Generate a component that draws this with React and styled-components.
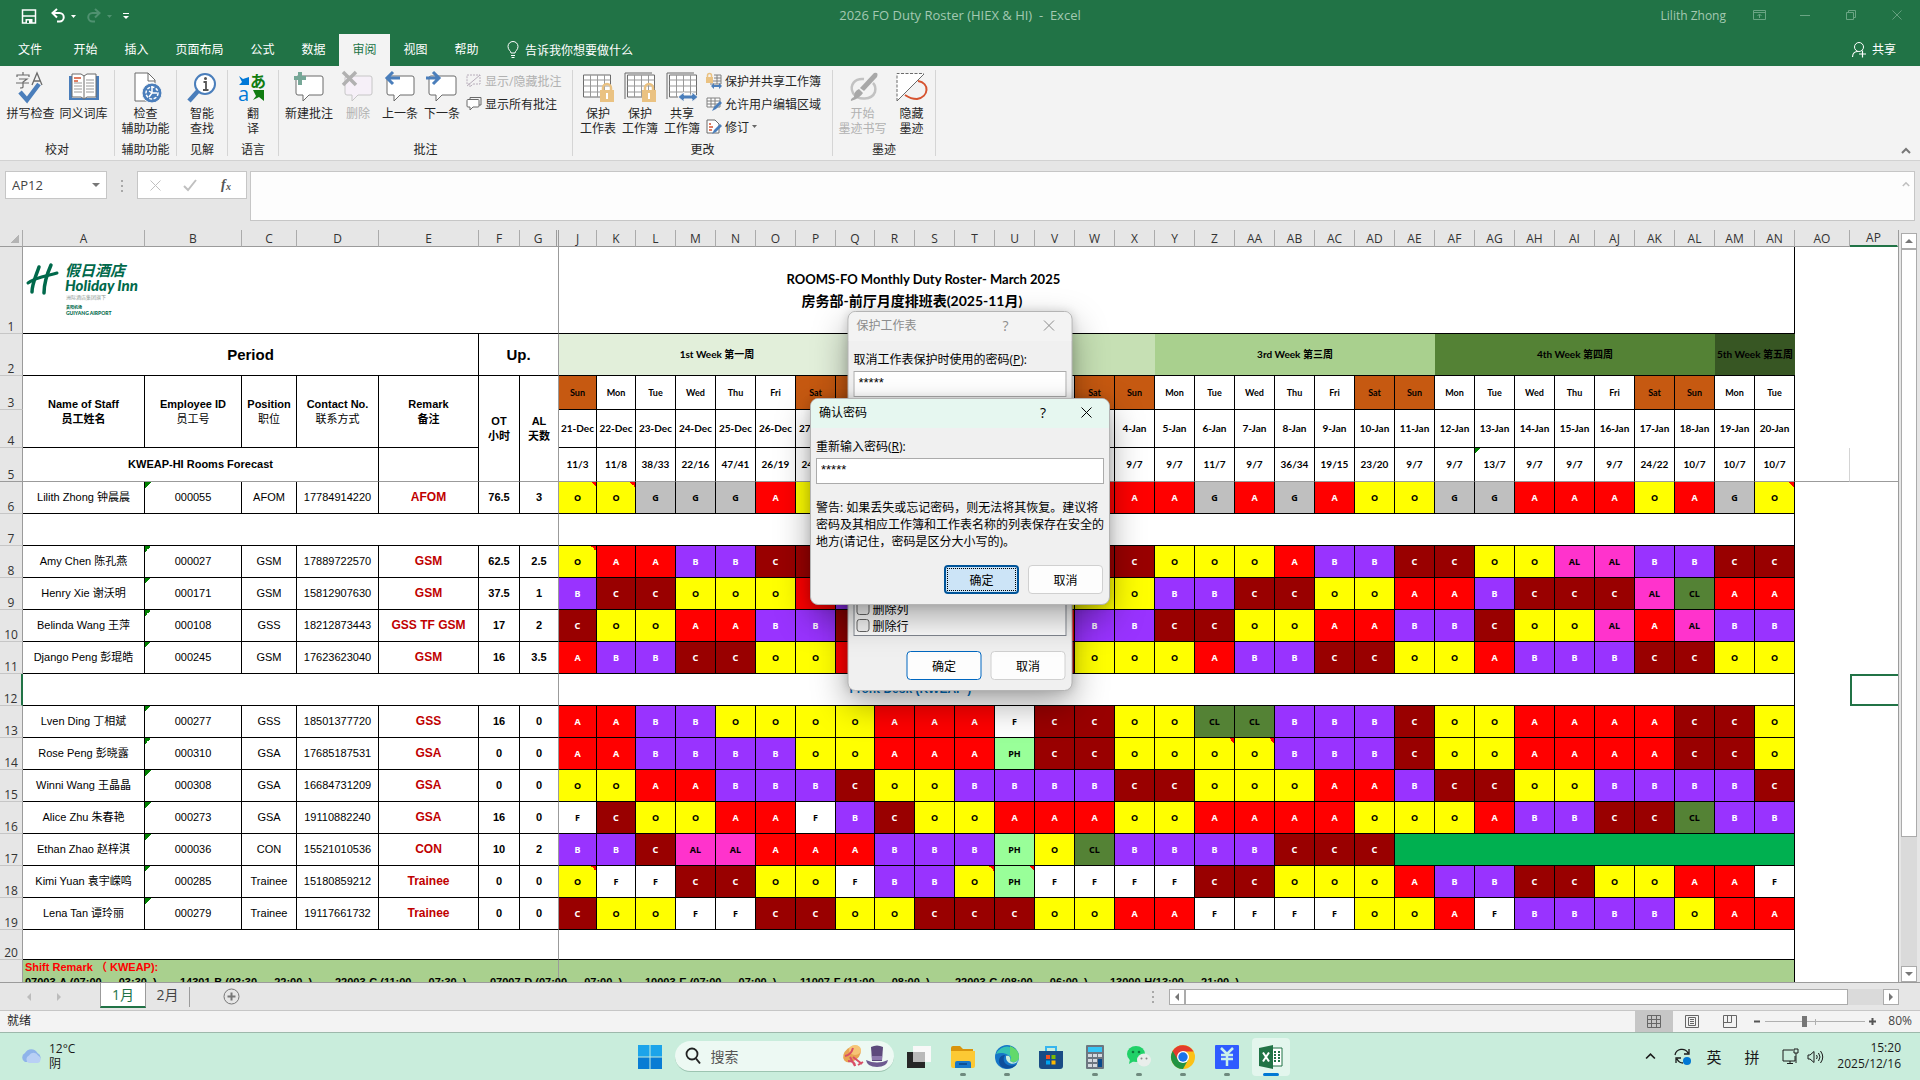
import { useState } from 'react'
import styled, { createGlobalStyle, css } from 'styled-components'

const GlobalStyle = createGlobalStyle`
  * {
    box-sizing: border-box;
  }
  body {
    margin: 0;
    font-family: 'Open Sans', 'Noto Sans CJK SC', sans-serif;
    font-size: 12px;
    color: #262626;
  }
  button, input, select, textarea {
    font: inherit;
    color: inherit;
  }
  button {
    padding: 0;
    border: 0;
    background: none;
  }
  svg {
    display: block;
    flex: none;
    overflow: visible;
  }
`

const Window = styled.div`
  display: flex;
  flex-direction: column;
  height: 100vh;
  overflow: hidden;
  background: #e6e6e6;
`

/* ---------- title bar and tabs ---------- */

const TitleBar = styled.header`
  display: grid;
  grid-template-columns: 1fr auto 1fr;
  align-items: center;
  height: 34px;
  padding-bottom: 4px;
  background: #217346;
  color: #a3c9b2;
`
const QuickAccess = styled.div`
  display: flex;
  align-items: center;
  gap: 10px;
  padding: 2px 0 0 18px;
`
const QuickButton = styled.button`
  display: flex;
  align-items: center;
  gap: 5px;
`
const DocTitle = styled.h1`
  margin: 0;
  font-size: 13px;
  font-weight: normal;
  white-space: pre;
`
const WindowControls = styled.div`
  display: flex;
  justify-content: flex-end;
  align-items: center;
`
const WindowButton = styled.button`
  display: flex;
  justify-content: center;
  width: 46px;
`
const UserName = styled.span`
  margin-right: 10px;
`
const TabBar = styled.nav`
  display: flex;
  align-items: center;
  height: 32px;
  padding-right: 24px;
  background: #217346;
  color: #fff;
`
const RibbonTab = styled.button`
  height: 32px;
  width: ${(p) => p.$width || 50}px;
  padding-bottom: 2px;
  background: ${(p) => (p.$active ? '#f3f3f3' : 'transparent')};
  color: ${(p) => (p.$active ? '#217346' : '#fff')};
`
const TellMe = styled.button`
  display: flex;
  align-items: center;
  gap: 6px;
  padding-left: 15px;
`
const ShareButton = styled.button`
  display: flex;
  align-items: center;
  gap: 4px;
  margin-left: auto;
  padding-bottom: 2px;
`

/* ---------- ribbon ---------- */

const Ribbon = styled.section`
  display: flex;
  height: 95px;
  padding: 4px 0;
  background: #f3f3f3;
  border-bottom: 1px solid #d2d2d2;
`
const Group = styled.div`
  display: flex;
  flex-direction: column;
  justify-content: space-between;
  padding: 0 ${(p) => p.$pad || 0}px;
  border-right: 1px solid #d5d5d5;
`
const GroupItems = styled.div`
  display: flex;
`
const GroupLabel = styled.div`
  line-height: 13px;
  text-align: center;
`
const LargeButton = styled.button`
  display: flex;
  flex-direction: column;
  align-items: center;
  gap: 3px;
  width: ${(p) => p.$width}px;
  padding-top: 1px;
  line-height: 15px;
  white-space: pre;
  color: ${(p) => (p.disabled ? '#b1b1b1' : '#262626')};
`
const SmallStack = styled.div`
  display: flex;
  flex-direction: column;
  min-width: ${(p) => p.$width}px;
`
const SmallButton = styled.button`
  display: flex;
  align-items: center;
  gap: 3px;
  height: 23px;
  padding: 0 3px 2px;
  white-space: nowrap;
  color: ${(p) => (p.disabled ? '#b1b1b1' : '#262626')};
`
const CollapseButton = styled.button`
  align-self: flex-end;
  margin-left: auto;
  padding: 0 9px 2px;
`

/* ---------- formula bar ---------- */

const FormulaBar = styled.section`
  display: flex;
  align-items: flex-start;
  height: 69px;
  padding: 10px 5px 9px;
`
const NameBox = styled.label`
  display: flex;
  align-items: center;
  width: 102px;
  height: 28px;
  padding-right: 6px;
  background: #fff;
  border: 1px solid #c6c6c6;
`
const NameInput = styled.input`
  width: 100%;
  min-width: 0;
  padding: 0 6px;
  border: 0;
  outline: 0;
  font-size: 13px;
  color: #444;
`
const Grip = styled.span`
  display: flex;
  flex-direction: column;
  gap: 3px;
  padding: ${(p) => p.$pad};
  margin-left: ${(p) => (p.$push ? 'auto' : 0)};
  &::before, &::after, & > i {
    content: '';
    width: 2px;
    height: 2px;
    background: #a8a8a8;
  }
`
const FormulaTools = styled.div`
  display: flex;
  align-items: center;
  justify-content: space-between;
  width: 110px;
  height: 28px;
  padding: 0 11px 0 12px;
  margin-right: 3px;
  background: #fff;
  border: 1px solid #c6c6c6;
`
const FormulaField = styled.div`
  display: flex;
  flex: 1;
  align-items: flex-start;
  height: 50px;
  padding-right: 4px;
  background: #fdfdfd;
  border: 1px solid #c6c6c6;
`
const FormulaInput = styled.textarea`
  flex: 1;
  height: 48px;
  border: 0;
  outline: 0;
  resize: none;
  background: transparent;
`
const FormulaCollapse = styled.button`
  padding-top: 10px;
`

/* ---------- sheet ---------- */

const SheetArea = styled.main`
  display: flex;
  flex: 1;
  min-height: 0;
`
const SheetView = styled.div`
  flex: 1;
  min-width: 0;
  overflow: hidden;
  border-right: 1px solid #9b9b9b;
`
const Table = styled.table`
  width: 100%;
  table-layout: fixed;
  border-collapse: separate;
  border-spacing: 0;
  background: #fff;
  color: #000;
  font-family: 'Liberation Sans', 'Noto Sans CJK SC', sans-serif;
  font-size: 11px;
`
const Row = styled.tr`
  height: ${(p) => p.$height}px;
`
const ColHead = styled.th`
  height: 17px;
  padding: 0;
  background: #e6e6e6;
  border-right: ${(p) => (p.$double ? '3px double #9b9b9b' : `1px solid ${p.$last ? '#e6e6e6' : '#ababab'}`)};
  border-bottom: ${(p) => (p.$active ? '2px solid #217346' : '1px solid #9b9b9b')};
  font: 12px/15px 'Open Sans', sans-serif;
  color: #333;
`
const Corner = styled(ColHead)`
  background: linear-gradient(to bottom right, transparent 50%, #b4b4b4 50%) no-repeat 11px 5px / 8px 8px #e6e6e6;
`
const RowHead = styled.th`
  padding: 0;
  vertical-align: bottom;
  background: #e6e6e6;
  border-right: ${(p) => (p.$active ? '2px solid #217346' : '1px solid #9b9b9b')};
  border-bottom: 1px solid ${(p) => (p.$frozen ? '#9b9b9b' : '#c6c6c6')};
  font: 12px/13px 'Open Sans', sans-serif;
  color: #333;
`

const black = '1px solid #000'
const gray = '1px solid #9b9b9b'

const Cell = styled.td`
  padding: 0;
  line-height: 15px;
  text-align: center;
  white-space: pre;
  font-weight: ${(p) => (p.$bold ? 'bold' : 'normal')};
  border-right: ${(p) => (p.$pane ? gray : p.$open ? 0 : black)};
  border-bottom: ${(p) => (p.$frozen ? gray : black)};
`
const BigCell = styled(Cell)`
  font-size: 15px;
  font-weight: bold;
`
const LogoCell = styled(Cell)`
  padding: 17px 4px 0;
  vertical-align: top;
`
const TitleCell = styled(Cell)`
  font: bold 13px/21px Lato, 'Noto Sans CJK SC', sans-serif;
`
const Subtitle = styled.span`
  font-size: 14px;
`
const SectionCell = styled(Cell)`
  font-size: 12px;
  font-weight: bold;
  color: #0070c0;
`
const SubLabel = styled.span`
  font-weight: normal;
`
const IdCell = styled(Cell)`
  background: linear-gradient(to bottom right, #008000 50%, transparent 50%) no-repeat 0 0 / 6px 6px;
`
const RemarkCell = styled(Cell)`
  font-size: 12px;
  font-weight: bold;
  color: #c00000;
`
const WeekCell = styled(Cell)`
  font: bold 10px/15px Lato, 'Noto Sans CJK SC', sans-serif;
  background: ${(p) => p.$color};
  border-right: 0;
`
const DayCell = styled(Cell)`
  font: bold ${(p) => (p.$small ? 9 : 10)}px/15px Lato, sans-serif;
  background: ${(p) => (p.$weekend ? '#c65911' : '#fff')};
  ${(p) =>
    p.$flag &&
    css`
      background: linear-gradient(to bottom right, #008000 50%, transparent 50%) no-repeat 0 0 / 5px 5px;
    `}
`
const shiftColors = {
  O: ['#ffff00', '#000'],
  A: ['#ff0000', '#fff'],
  B: ['#9933ff', '#fff'],
  C: ['#990000', '#fff'],
  G: ['#bfbfbf', '#000'],
  F: ['#ffffff', '#000'],
  AL: ['#ff33cc', '#000'],
  CL: ['#548235', '#000'],
  PH: ['#99ff99', '#000'],
  '': ['#00b050', '#000'],
}
const ShiftCell = styled(Cell)`
  font: bold 9px/15px 'Noto Sans', sans-serif;
  color: ${(p) => shiftColors[p.$code][1]};
  background: ${(p) => (p.$note ? 'linear-gradient(to bottom left, #ff0000 50%, transparent 50%) no-repeat 100% 0 / 5px 5px' : 'none')}
    ${(p) => shiftColors[p.$code][0]};
`
const BlankCell = styled.td`
  padding: 0;
  border-bottom: ${(p) => (p.$frozen ? gray : 0)};
  border-right: ${(p) => (p.$line ? '1px solid #d4d4d4' : 0)};
`
const SelectedCell = styled.td`
  border: 2px solid #217346;
  border-right: 0;
`
const NoteCell = styled(Cell)`
  padding-left: 2px;
  vertical-align: top;
  text-align: left;
  font-weight: bold;
  background: #a9d08e;
`
const NoteHeading = styled.div`
  color: #ff0000;
`
const NoteShifts = styled.div`
  display: flex;
`
const NoteShift = styled.span`
  flex: none;
  width: 155px;
`

const ScrollColumn = styled.div`
  display: flex;
  flex-direction: column;
  width: 21px;
  padding: 3px 3px 0 2px;
`
const ScrollTrack = styled.div`
  flex: 1;
  display: flex;
  flex-direction: ${(p) => (p.$vertical ? 'column' : 'row')};
  background: #dadada;
`
const ScrollThumb = styled.div`
  flex-basis: ${(p) => p.$size};
  background: #fff;
  border: 1px solid #ababab;
`
const ScrollButton = styled.button`
  display: flex;
  align-items: center;
  justify-content: center;
  width: 16px;
  height: 16px;
  background: #fff;
  border: 1px solid #ababab;
`

/* ---------- bottom bars ---------- */

const SheetTabs = styled.div`
  display: flex;
  align-items: center;
  height: 29px;
  border-top: 1px solid #9b9b9b;
  border-bottom: 1px solid #c6c6c6;
  padding-right: 21px;
`
const SheetNav = styled.div`
  display: flex;
  justify-content: center;
  gap: 22px;
  width: 100px;
  padding-right: 12px;
`
const SheetTab = styled.button`
  align-self: flex-start;
  width: ${(p) => (p.$active ? 46 : 43)}px;
  height: 25px;
  padding-bottom: 2px;
  font-size: 14px;
  color: ${(p) => (p.$active ? '#217346' : '#444')};
  background: ${(p) => (p.$active ? '#fff' : 'transparent')};
  border-bottom: 2px solid ${(p) => (p.$active ? '#217346' : 'transparent')};
  border-left: 1px solid ${(p) => (p.$active ? '#9b9b9b' : 'transparent')};
  border-right: 1px solid ${(p) => (p.$active ? '#9b9b9b' : 'transparent')};
`
const TabDivider = styled.span`
  width: 1px;
  height: 20px;
  margin-right: 33px;
  background: #9b9b9b;
`
const HScroll = styled.div`
  display: flex;
  width: 730px;
  height: 16px;
`
const StatusBar = styled.footer`
  display: flex;
  align-items: center;
  height: 22px;
  padding: 0 8px 0 7px;
  line-height: 20px;
  background: #f3f3f3;
  border-bottom: 1px solid #9db8ab;
`
const StatusText = styled.span`
  padding-bottom: 2px;
`
const ViewButton = styled.button`
  display: flex;
  align-items: center;
  justify-content: center;
  width: 38px;
  height: 21px;
  background: ${(p) => (p.$active ? '#c6c6c6' : 'transparent')};
`
const ViewButtons = styled.div`
  display: flex;
  margin: 0 5px 0 auto;
`
const ZoomSlider = styled.input`
  appearance: none;
  width: 100px;
  height: 12px;
  margin: 0 4px;
  background:
    linear-gradient(#b0b0b0, #b0b0b0) no-repeat 50px 50% / 1px 6px,
    linear-gradient(#b0b0b0, #b0b0b0) no-repeat 0 50% / 100% 1px;
  &::-webkit-slider-thumb {
    appearance: none;
    width: 5px;
    height: 11px;
    background: #767676;
  }
`
const ZoomValue = styled.span`
  width: 36px;
  padding-bottom: 2px;
  text-align: right;
  color: #444;
`

/* ---------- dialogs ---------- */

const Dialog = styled.section`
  position: absolute;
  top: ${(p) => p.$top}px;
  left: 50%;
  width: ${(p) => p.$width}px;
  transform: translateX(-50%);
  background: #f0f0f0;
  border: 1px solid #b4b4b4;
  border-radius: 8px;
  box-shadow: 0 14px 34px rgba(0, 0, 0, 0.34), 0 0 10px rgba(0, 0, 0, 0.14);
  color: #000;
  overflow: hidden;
`
const DialogTitle = styled.header`
  display: flex;
  align-items: center;
  height: 29px;
  padding: 0 17px 3px 8px;
  background: ${(p) => (p.$active ? '#e6f7f0' : '#f3f3f3')};
  color: ${(p) => (p.$active ? '#000' : '#8c8c8c')};
`
const DialogHeading = styled.h2`
  flex: 1;
  margin: 0;
  font-size: 12px;
  font-weight: normal;
`
const DialogHelp = styled.button`
  width: 16px;
  margin-right: 30px;
  font-size: 14px;
`
const DialogBody = styled.div`
  padding: 10px 5px;
`
const FieldLabel = styled.label`
  display: block;
  line-height: 17px;
  margin-bottom: 3px;
`
const PasswordInput = styled.input`
  display: block;
  width: 100%;
  height: 26px;
  padding: 0 4px 4px;
  border: 1px solid #ababab;
  background: #fff;
  outline: 0;
  font: 13px 'Liberation Sans', sans-serif;
`
const Warning = styled.p`
  margin: 15px 0;
  line-height: 17px;
  white-space: pre;
`
const PermissionList = styled.div`
  display: flex;
  flex-direction: column;
  justify-content: flex-end;
  height: 231px;
  margin-top: 8px;
  padding: 2px 18px 1px 2px;
  background: #fff;
  border: 1px solid #828790;
`
const CheckRow = styled.label`
  display: flex;
  align-items: center;
  gap: 3px;
  height: 17px;
`
const CheckBox = styled.input`
  appearance: none;
  width: 13px;
  height: 13px;
  margin: 0;
  border: 1px solid #666;
  border-radius: 3px;
  background: #f6f6f6;
`
const DialogActions = styled.div`
  display: flex;
  justify-content: flex-end;
  gap: 9px;
  padding: ${(p) => p.$top || 0}px 1px 0;
`
const DialogButton = styled.button`
  width: 75px;
  height: 29px;
  background: #fdfdfd;
  border: 1px solid ${(p) => (p.$primary ? '#0067c0' : '#d0d0d0')};
  border-radius: 4px;
  ${(p) =>
    p.$focused &&
    css`
      background: #cce4f7;
      border: 2px solid #005499;
      outline: 1px dotted #000;
      outline-offset: -4px;
    `}
`

/* ---------- taskbar ---------- */

const Taskbar = styled.footer`
  display: grid;
  grid-template-columns: 1fr auto 1fr;
  align-items: center;
  height: 47px;
  padding: 0 19px;
  background: #c9eddc;
  color: #1a1a1a;
`
const Weather = styled.div`
  display: flex;
  align-items: center;
  gap: 6px;
  padding-bottom: 2px;
  line-height: 15px;
`
const Apps = styled.div`
  display: flex;
  align-items: center;
`
const AppButton = styled.button`
  display: flex;
  align-items: center;
  justify-content: center;
  position: relative;
  width: 38px;
  height: 38px;
  margin: 0 3px;
  border-radius: 4px;
  background: ${(p) => (p.$active ? '#e3f6ed' : 'transparent')};
  &::after {
    content: '';
    position: absolute;
    bottom: 0;
    width: ${(p) => (p.$active ? 16 : 6)}px;
    height: 3px;
    border-radius: 2px;
    background: ${(p) => (p.$active ? '#0078d4' : p.$running ? '#6f8a7e' : 'transparent')};
  }
`
const SearchBox = styled.label`
  display: flex;
  align-items: center;
  gap: 10px;
  width: 219px;
  height: 31px;
  margin: 0 3px;
  padding: 0 5px 0 10px;
  border-radius: 16px;
  background: #edf9f3;
  border-bottom: 1px solid #9cc4b1;
`
const SearchInput = styled.input`
  flex: 1;
  min-width: 0;
  padding: 0;
  border: 0;
  outline: 0;
  background: transparent;
  font-size: 14px;
  &::placeholder {
    color: #555;
  }
`
const Tray = styled.div`
  display: flex;
  justify-content: flex-end;
  align-items: center;
`
const TrayItem = styled.button`
  display: flex;
  justify-content: center;
  width: ${(p) => p.$width}px;
  font-size: 15px;
`
const Clock = styled.div`
  width: 77px;
  padding-bottom: 2px;
  line-height: 16px;
  text-align: right;
`

/* ---------- icons ---------- */

const Svg = ({ w = 32, h = w, children }) => (
  <svg width={w} height={h} viewBox={`0 0 ${w} ${h}`} fill='none' aria-hidden='true'>
    {children}
  </svg>
)

const Caret = ({ color = '#fff' }) => (
  <Svg w={5} h={3}>
    <path d='M0 0h5L2.500 3z' fill={color} />
  </Svg>
)

const Arrow = ({ dir, color = '#777', size = 8 }) => (
  <Svg w={size}>
    <path d={dir} fill={color} />
  </Svg>
)

const ARROWS = {
  up: 'M0 6l4-4 4 4z',
  down: 'M0 2l4 4 4-4z',
  left: 'M6 0L2 4l4 4z',
  right: 'M2 0l4 4-4 4z',
}

const Chevron = ({ color = '#777', width = 2, size = 10 }) => (
  <svg width={size} height={size * 0.6} viewBox='0 0 10 6' fill='none' aria-hidden='true'>
    <path d='M1 5l4-4 4 4' stroke={color} strokeWidth={width} />
  </svg>
)

const SaveIcon = () => (
  <Svg w={22} h={16}>
    <path d='M4.500 2h13v13h-13z' stroke='#fff' strokeWidth='1.500' />
    <path d='M5 8h12' stroke='#fff' strokeWidth='1.500' />
    <path d='M7.500 11h7v4h-7z' fill='#fff' />
    <path d='M9 12.500h2V15H9z' fill='#217346' />
  </Svg>
)

const UndoIcon = ({ flip, color }) => (
  <svg width='16' height='16' viewBox='0 0 16 16' fill='none' aria-hidden='true'>
    <g transform={flip ? 'matrix(-1 0 0 1 16 0)' : undefined}>
      <path d='M2 5h7.500a4 4 0 0 1 0 8.500H7' stroke={color} strokeWidth='2' />
      <path d='M7 1L2.500 5 7 9.500' stroke={color} strokeWidth='2' />
    </g>
  </svg>
)

const BulbIcon = () => (
  <Svg w={12} h={18}>
    <path d='M4 12c0-2-3-3-3-6.500a5 5 0 0 1 10 0C11 9 8 10 8 12zM4 14.500h4M4.500 16.500h3' stroke='#fff' />
  </Svg>
)

const ShareIcon = () => (
  <Svg w={17} h={17}>
    <circle cx='8' cy='6' r='4.500' stroke='#fff' />
    <path d='M1.500 16c0-4 3-5.500 5.500-5.500M8 13h7M11.500 9.500v7' stroke='#fff' strokeWidth='1.200' />
  </Svg>
)

const SpellIcon = () => (
  <Svg>
    <path d='M2 6V4h12v2M8 1v3M4 8h8l-4 3v5c0 1-1 1-3 1M1 12h13' stroke='#6b6b6b' strokeWidth='1.200' />
    <path d='M17 14l5-12 5 12M19 10h6' stroke='#6b6b6b' strokeWidth='1.300' />
    <path d='M5 21l7 8L24 13' stroke='#4a7ebb' strokeWidth='4.500' />
  </Svg>
)

const BookIcon = () => (
  <Svg>
    <path d='M1 5h3v22h24V5h3v24H1z' fill='#4a7ebb' />
    <path d='M4 3h9l3 2 3-2h9v23h-9l-3 2-3-2H4zM16 5v22' fill='#fff' stroke='#6b6b6b' />
    <path d='M6 12h8M6 15h8M6 18h8M6 21h8M18 9h8M18 12h8M18 15h8M18 18h8M18 21h8' stroke='#999' />
    <path d='M6 7h7M6 10h4' stroke='#d6532f' strokeWidth='1.500' />
  </Svg>
)

const AccessIcon = () => (
  <Svg>
    <path d='M5 2h13l7 7v21H5z' fill='#fff' stroke='#6b6b6b' />
    <path d='M18 2v8h7' stroke='#6b6b6b' />
    <circle cx='22' cy='22' r='10' fill='#4a7ebb' stroke='#f3f3f3' />
    <circle cx='22' cy='22' r='6' stroke='#fff' strokeWidth='1.500' strokeDasharray='3 1.500' />
    <path d='M22 15v7h5M19 20l3 2-3 4' stroke='#fff' strokeWidth='1.500' />
  </Svg>
)

const LookupIcon = () => (
  <Svg>
    <path d='M12 20L3 30' stroke='#4a7ebb' strokeWidth='4.500' />
    <circle cx='19' cy='13' r='10' fill='#fff' stroke='#4a7ebb' strokeWidth='2' />
    <path d='M17.500 11H20v8M17 19h5.500' stroke='#555' strokeWidth='1.800' />
    <circle cx='19.500' cy='7.500' r='1.500' fill='#555' />
  </Svg>
)

const TranslateIcon = () => (
  <Svg>
    <path d='M2 5l4 3 6-2v8H2l3-3z' fill='#0078d7' />
    <text x='1' y='30' fontSize='20' fontFamily='Open Sans' fill='#0078d7'>a</text>
    <text x='13' y='16' fontSize='16' fontWeight='bold' fontFamily='Noto Sans CJK SC' fill='#107c10'>あ</text>
    <path d='M16 19h11v11l-5-4-6 3 3-4z' fill='#107c10' />
  </Svg>
)

const CommentIcon = ({ mark, faded }) => (
  <Svg>
    <path
      d='M5 5h23q2 0 2 2v15q0 2-2 2H16l-6 6v-6H5q-2 0-2-2V7q0-2 2-2z'
      fill={faded ? '#f6f0f8' : '#fff'}
      stroke={faded ? '#c6c6c6' : '#6b6b6b'}
    />
    {mark === 'plus' && <path d='M7 1v13M1 7h12' stroke='#76a797' strokeWidth='4' />}
    {mark === 'cross' && <path d='M1 1l13 13M14 1L1 14' stroke='#b1b1b1' strokeWidth='3.500' />}
    {mark === 'prev' && <path d='M16 7H3M9 1L3 7l6 6' stroke='#4a7ebb' strokeWidth='3' />}
    {mark === 'next' && <path d='M0 7h13M7 1l6 6-6 6' stroke='#4a7ebb' strokeWidth='3' />}
  </Svg>
)

const SmallCommentIcon = ({ faded }) => (
  <Svg w={16}>
    {faded ? (
      <>
        <path d='M1 2h13v9H7l-3 3v-3H1z' stroke='#b8aebb' strokeDasharray='2 1' />
        <path d='M1 13L14 2' stroke='#b8aebb' />
      </>
    ) : (
      <>
        <path d='M4 3V1.500h11V9h-2' stroke='#6b6b6b' />
        <path d='M2 3.500h10q1 0 1 1V10q0 1-1 1H7l-3 3v-3H2q-1 0-1-1V4.500q0-1 1-1z' fill='#fff' stroke='#6b6b6b' />
      </>
    )}
  </Svg>
)

const SheetGrid = ({ x = 0 }) => (
  <>
    <path d={`M${x} 4h27v22h-27z`} fill='#fff' stroke='#6b6b6b' />
    <path d={`M${x} 9h27M${x} 15h27M${x} 21h27M${x + 7} 4v22M${x + 14} 4v22M${x + 21} 4v22`} stroke='#999' />
  </>
)

const ProtectIcon = ({ book }) => (
  <Svg>
    {book && <path d='M1 28V2h27' stroke='#6b6b6b' />}
    <SheetGrid x={book ? 3.5 : 1.5} />
    <path d='M21 20v-3a4 4 0 0 1 8 0v3' stroke='#eac282' strokeWidth='2.500' />
    <path d='M18 19h14v12H18z' fill='#eac282' />
    <path d='M25 22v6' stroke='#fff' strokeWidth='2' />
  </Svg>
)

const ShareBookIcon = () => (
  <Svg>
    <path d='M1 28V2h27' stroke='#6b6b6b' />
    <SheetGrid x={3.5} />
    <path d='M12 26l6-5v3h8v-3l6 5-6 5v-3h-8v3z' fill='#4a7ebb' stroke='#f3f3f3' />
  </Svg>
)

const ProtectShareIcon = () => (
  <Svg w={16}>
    <path d='M8 2h7v9H4M8 5h7M4 8h11M11 2v9' stroke='#808080' />
    <path d='M0 4h7v6H0z' fill='#eac282' />
    <path d='M1.500 4V2.500a2 2 0 0 1 4 0V4' stroke='#eac282' strokeWidth='1.500' />
    <path d='M5 13l3-3v2h5v-2l3 3-3 3v-2H8v2z' fill='#4a7ebb' />
  </Svg>
)

const EditRangesIcon = () => (
  <Svg w={16}>
    <path d='M1 2h13v9H1zM1 5h13M1 8h13M5 2v9M9 2v9' fill='#fff' stroke='#808080' />
    <path d='M6 15l2-4 6-6 2 2-6 6z' fill='#4a7ebb' />
  </Svg>
)

const TrackIcon = () => (
  <Svg w={16}>
    <path d='M1 1h8l4 4v9H1z' fill='#fff' stroke='#6b6b6b' />
    <path d='M3 5h2M3 8h4M3 11h3' stroke='#d6532f' strokeWidth='1.500' />
    <path d='M6 15l2-4 6-6 2 2-6 6z' fill='#4a7ebb' />
  </Svg>
)

const InkIcon = () => (
  <Svg>
    <path d='M17 8C8 7 2 14 6 22c5 8 19 7 22-1 1-4 0-7-2-9' stroke='#c2c2c2' strokeWidth='2.500' />
    <path d='M13 17L27 2q5-1 3 4L17 20z' fill='#a8a8a8' />
    <path d='M12 18l4 4q-3 5-12 8-1-2 3-4 0-6 5-8z' fill='#a8a8a8' />
  </Svg>
)

const HideInkIcon = () => (
  <Svg>
    <path d='M1 30V3h27z' fill='#fff' />
    <path d='M1 30V2.500h27' stroke='#6b6b6b' strokeDasharray='3 1.500' />
    <path d='M22 10c12 2 11 16-1 18-6 0-9-2-12-4' stroke='#d6532f' strokeWidth='2' />
    <path d='M1 30L28 3' stroke='#6b6b6b' />
  </Svg>
)

const LogoImage = () => (
  <svg width='120' height='56' viewBox='0 0 120 56' role='img' aria-label='Holiday Inn Guiyang Airport'>
    <g stroke='#00694b' fill='none' strokeLinecap='round'>
      <path d='M12 3C9 12 5 20 5 28' strokeWidth='3.500' />
      <path d='M24 1C20 10 17 20 17 29' strokeWidth='3.500' />
      <path d='M1 19C9 13 20 12 30 9' strokeWidth='3' />
    </g>
    <g fill='#00694b' fontFamily="Lato, 'Noto Sans CJK SC', sans-serif" fontWeight='bold'>
      <text x='38' y='12' fontSize='15' fontStyle='italic'>假日酒店</text>
      <text x='38' y='27' fontSize='15' fontWeight='900' fontStyle='italic'>Holiday Inn</text>
      <text x='39' y='35' fontSize='5' fill='#8c9994' fontWeight='normal'>洲际酒店集团旗下</text>
      <text x='39' y='45' fontSize='4'>贵阳机场</text>
      <text x='39' y='51' fontSize='5' fontWeight='900'>GUIYANG AIRPORT</text>
    </g>
  </svg>
)

const CloseIcon = ({ color = 'currentColor', size = 11 }) => (
  <svg width={size} height={size} viewBox='0 0 11 11' fill='none' aria-hidden='true'>
    <path d='M.5.5l10 10M10.500.5l-10 10' stroke={color} />
  </svg>
)

/* ---------- data ---------- */

const columns = [
  ['A', 122], ['B', 97], ['C', 55], ['D', 82], ['E', 100], ['F', 41], ['G', 39],
  ['J', 38], ['K', 39], ['L', 40], ['M', 40], ['N', 40], ['O', 40], ['P', 40], ['Q', 39],
  ...['R', 'S', 'T', 'U', 'V', 'W', 'X', 'Y', 'Z', 'AA', 'AB', 'AC', 'AD', 'AE', 'AF',
    'AG', 'AH', 'AI', 'AJ', 'AK', 'AL', 'AM', 'AN'].map((name) => [name, 40]),
  ['AO', 55], ['AP'],
]

const weekdays = ['Sun', 'Mon', 'Tue', 'Wed', 'Thu', 'Fri', 'Sat']

const days = Array.from({ length: 31 }, (_, i) => ({
  name: weekdays[i % 7],
  date: i < 11 ? `${21 + i}-Dec` : `${i - 10}-Jan`,
  weekend: i % 7 === 0 || i % 7 === 6,
}))

const forecast = (
  '11/3 11/8 38/33 22/16 47/41 26/19 24/18 20/15 18/12 16/10 25/21 30/26 22/18 12/8 9/7 9/7 ' +
  '11/7 9/7 36/34 19/15 23/20 9/7 9/7 13/7 9/7 9/7 9/7 24/22 10/7 10/7 10/7'
).split(' ')

const weeks = [
  ['1st Week 第一周', 8, '#e2efda'],
  ['2nd Week 第二周', 7, '#c6e0b4'],
  ['3rd Week 第三周', 7, '#a9d08e'],
  ['4th Week 第四周', 7, '#548235'],
  ['5th Week 第五周', 2, '#375623'],
]

// an asterisk marks a cell with a note attached
const staff = [
  { row: 6, name: 'Lilith Zhong 钟晨晨', id: '000055', pos: 'AFOM', tel: '17784914220', remark: 'AFOM', ot: '76.5', al: '3',
    shifts: 'O* O* G G G A O O A A A O O A A A G A G A O O G G A A A O A G O*' },
  { row: 8, name: 'Amy Chen 陈孔燕', id: '000027', pos: 'GSM', tel: '17889722570', remark: 'GSM', ot: '62.5', al: '2.5',
    shifts: 'O* A A B B C C O O A A B B C C O O O A B B C C O O AL AL B B C C' },
  { row: 9, name: 'Henry Xie 谢沃明', id: '000171', pos: 'GSM', tel: '15812907630', remark: 'GSM', ot: '37.5', al: '1',
    shifts: 'B C C O O O A B B C C O O O O B B C C O O A A B C C C AL CL A A' },
  { row: 10, name: 'Belinda Wang 王萍', id: '000108', pos: 'GSS', tel: '18212873443', remark: 'GSS TF GSM', ot: '17', al: '2',
    shifts: 'C O O A A B B C C O O A A B B C C O O A A B B C O O AL A AL B B' },
  { row: 11, name: 'Django Peng 彭琨皓', id: '000245', pos: 'GSM', tel: '17623623040', remark: 'GSM', ot: '16', al: '3.5',
    shifts: 'A B B C C O O A A B B C C O O O A B B C C O O A B B B C C O O' },
  { row: 13, name: 'Lven Ding 丁相斌', id: '000277', pos: 'GSS', tel: '18501377720', remark: 'GSS', ot: '16', al: '0',
    shifts: 'A A B B O O O O A A A F C C O O CL CL B B B C O O A A A A C C O' },
  { row: 14, name: 'Rose Peng 彭晓露', id: '000310', pos: 'GSA', tel: '17685187531', remark: 'GSA', ot: '0', al: '0',
    shifts: 'A A B B B B O O A A A PH C C O O O* O* B B B C O O A A A A C C O' },
  { row: 15, name: 'Winni Wang 王晶晶', id: '000308', pos: 'GSA', tel: '16684731209', remark: 'GSA', ot: '0', al: '0',
    shifts: 'O O A A B B B C O O B B B B C C O O O A A B C C O O B B B B C' },
  { row: 16, name: 'Alice Zhu 朱春艳', id: '000273', pos: 'GSA', tel: '19110882240', remark: 'GSA', ot: '16', al: '0',
    shifts: 'F C O O A A F B C O O A A A O O A A A A O O O A B B C C CL B B' },
  { row: 17, name: 'Ethan Zhao 赵梓淇', id: '000036', pos: 'CON', tel: '15521010536', remark: 'CON', ot: '10', al: '2',
    shifts: 'B B C AL AL A A A B B B PH O CL B B B B C C C', leave: 10 },
  { row: 18, name: 'Kimi Yuan 袁宇嵘鸣', id: '000285', pos: 'Trainee', tel: '15180859212', remark: 'Trainee', ot: '0', al: '0',
    shifts: 'O* F F C C O O F B B O* PH* F F F F C C O O O A B B C C O O A A F' },
  { row: 19, name: 'Lena Tan 谭玲丽', id: '000279', pos: 'Trainee', tel: '19117661732', remark: 'Trainee', ot: '0', al: '0',
    shifts: 'C O O F F C C O O C C C O O A A F F F F O O A F B B B B O A A' },
]

const shiftNotes = [
  '07003-A (07:00 — 03:30  )', '14301-B (03:30 — 22:00  )', '22003-C (11:00 — 07:30  )',
  '07007-D (07:00 — 07:00  )', '10003-E (07:00 — 07:00  )', '11007-F (11:00 — 08:00  )',
  '22003-G (08:00 — 06:00  )', '13000-H(13:00 — 21:00  )',
]

/* ---------- sections ---------- */

const StaffRow = ({ person }) => (
  <Row $height={32}>
    <RowHead>{person.row}</RowHead>
    <Cell>{person.name}</Cell>
    <IdCell>{person.id}</IdCell>
    <Cell>{person.pos}</Cell>
    <Cell>{person.tel}</Cell>
    <RemarkCell>{person.remark}</RemarkCell>
    <Cell $bold>{person.ot}</Cell>
    <Cell $bold $pane>{person.al}</Cell>
    {person.shifts.split(' ').map((shift, i) => {
      const code = shift.replace('*', '')
      return (
        <ShiftCell key={i} $code={code} $note={shift !== code}>
          {code}
        </ShiftCell>
      )
    })}
    {person.leave && <ShiftCell $code='' colSpan={person.leave} />}
    <BlankCell />
    <BlankCell />
  </Row>
)

const SectionRow = ({ row, height = 32, title, selected }) => (
  <Row $height={height}>
    <RowHead $active={selected}>{row}</RowHead>
    <Cell colSpan={7} $pane />
    <SectionCell colSpan={18} $open>{title}</SectionCell>
    <Cell colSpan={13} />
    <BlankCell />
    {selected ? <SelectedCell /> : <BlankCell />}
  </Row>
)

const Roster = () => {
  const people = (from, to) =>
    staff.filter((p) => p.row >= from && p.row <= to).map((p) => <StaffRow key={p.row} person={p} />)

  return (
    <Table>
      <colgroup>
        <col width='23' />
        {columns.map(([name, width]) => (
          <col key={name} width={width} />
        ))}
      </colgroup>
      <thead>
        <Row $height={17}>
          <Corner />
          {columns.map(([name]) => (
            <ColHead key={name} $active={name === 'AP'} $last={name === 'AP'} $double={name === 'G'}>
              {name}
            </ColHead>
          ))}
        </Row>
      </thead>
      <tbody>
        <Row $height={87}>
          <RowHead>1</RowHead>
          <LogoCell colSpan={7} $pane>
            <LogoImage />
          </LogoCell>
          <TitleCell colSpan={18} $open>
            {'    ROOMS-FO Monthly Duty Roster- March 2025\n'}
            <Subtitle>{'房务部-前厅月度排班表(2025-11月)   '}</Subtitle>
          </TitleCell>
          <Cell colSpan={13} />
          <BlankCell />
          <BlankCell />
        </Row>
        <Row $height={42}>
          <RowHead>2</RowHead>
          <BigCell colSpan={5}>Period</BigCell>
          <BigCell colSpan={2} $pane>Up.</BigCell>
          {weeks.map(([label, span, color]) => (
            <WeekCell key={label} colSpan={span} $color={color}>
              {label}
            </WeekCell>
          ))}
          <BlankCell />
          <BlankCell />
        </Row>
        <Row $height={34}>
          <RowHead>3</RowHead>
          <Cell rowSpan={2} $bold>{'Name of Staff\n员工姓名'}</Cell>
          <Cell rowSpan={2} $bold>{'Employee ID\n'}<SubLabel>员工号</SubLabel></Cell>
          <Cell rowSpan={2} $bold>{'Position\n'}<SubLabel>职位</SubLabel></Cell>
          <Cell rowSpan={2} $bold>{'Contact No.\n'}<SubLabel>联系方式</SubLabel></Cell>
          <Cell rowSpan={2} $bold>{'Remark\n备注'}</Cell>
          <Cell rowSpan={3} $bold $frozen>{'OT\n小时'}</Cell>
          <Cell rowSpan={3} $bold $frozen $pane>{'AL\n天数'}</Cell>
          {days.map((day) => (
            <DayCell key={day.date} $small $weekend={day.weekend}>
              {day.name}
            </DayCell>
          ))}
          <BlankCell />
          <BlankCell />
        </Row>
        <Row $height={38}>
          <RowHead>4</RowHead>
          {days.map((day) => (
            <DayCell key={day.date}>{day.date}</DayCell>
          ))}
          <BlankCell />
          <BlankCell />
        </Row>
        <Row $height={34}>
          <RowHead $frozen>5</RowHead>
          <Cell colSpan={4} $bold $frozen>KWEAP-HI Rooms Forecast</Cell>
          <Cell $frozen />
          {forecast.map((value, i) => (
            <DayCell key={i} $frozen $flag={value === '13/7'}>
              {value}
            </DayCell>
          ))}
          <BlankCell $frozen $line />
          <BlankCell $frozen />
        </Row>
        {people(6, 6)}
        <SectionRow row={7} />
        {people(8, 11)}
        <SectionRow row={12} title='Front Desk (KWEAP )    ' selected />
        {people(13, 19)}
        <SectionRow row={20} height={30} />
        <Row $height={60}>
          <RowHead>21</RowHead>
          <NoteCell colSpan={7} $pane>
            <NoteHeading>Shift Remark （ KWEAP):</NoteHeading>
            <NoteShifts>
              {shiftNotes.map((note) => (
                <NoteShift key={note}>{note}</NoteShift>
              ))}
            </NoteShifts>
          </NoteCell>
          <NoteCell colSpan={31} />
          <BlankCell />
          <BlankCell />
        </Row>
      </tbody>
    </Table>
  )
}

const RibbonBar = () => (
  <Ribbon>
    <Group $pad={4}>
      <GroupItems>
        <LargeButton $width={53}><SpellIcon />拼写检查</LargeButton>
        <LargeButton $width={53}><BookIcon />同义词库</LargeButton>
      </GroupItems>
      <GroupLabel>校对</GroupLabel>
    </Group>
    <Group>
      <LargeButton $width={61}><AccessIcon />{'检查\n辅助功能'}</LargeButton>
      <GroupLabel>辅助功能</GroupLabel>
    </Group>
    <Group>
      <LargeButton $width={50}><LookupIcon />{'智能\n查找'}</LargeButton>
      <GroupLabel>见解</GroupLabel>
    </Group>
    <Group>
      <LargeButton $width={50}><TranslateIcon />{'翻\n译'}</LargeButton>
      <GroupLabel>语言</GroupLabel>
    </Group>
    <Group $pad={2}>
      <GroupItems>
        <LargeButton $width={56}><CommentIcon mark='plus' />新建批注</LargeButton>
        <LargeButton $width={42} disabled><CommentIcon mark='cross' faded />删除</LargeButton>
        <LargeButton $width={42}><CommentIcon mark='prev' />上一条</LargeButton>
        <LargeButton $width={42}><CommentIcon mark='next' />下一条</LargeButton>
        <SmallStack $width={107}>
          <SmallButton disabled><SmallCommentIcon faded />显示/隐藏批注</SmallButton>
          <SmallButton><SmallCommentIcon />显示所有批注</SmallButton>
        </SmallStack>
      </GroupItems>
      <GroupLabel>批注</GroupLabel>
    </Group>
    <Group $pad={4}>
      <GroupItems>
        <LargeButton $width={42}><ProtectIcon />{'保护\n工作表'}</LargeButton>
        <LargeButton $width={42}><ProtectIcon book />{'保护\n工作簿'}</LargeButton>
        <LargeButton $width={42}><ShareBookIcon />{'共享\n工作簿'}</LargeButton>
        <SmallStack $width={125}>
          <SmallButton><ProtectShareIcon />保护并共享工作簿</SmallButton>
          <SmallButton><EditRangesIcon />允许用户编辑区域</SmallButton>
          <SmallButton><TrackIcon />修订 <Caret color='#666' /></SmallButton>
        </SmallStack>
      </GroupItems>
      <GroupLabel>更改</GroupLabel>
    </Group>
    <Group $pad={2}>
      <GroupItems>
        <LargeButton $width={55} disabled><InkIcon />{'开始\n墨迹书写'}</LargeButton>
        <LargeButton $width={43}><HideInkIcon />{'隐藏\n墨迹'}</LargeButton>
      </GroupItems>
      <GroupLabel>墨迹</GroupLabel>
    </Group>
    <CollapseButton aria-label='Collapse ribbon'><Chevron /></CollapseButton>
  </Ribbon>
)

const ProtectDialog = () => (
  <Dialog $top={311} $width={225}>
    <DialogTitle>
      <DialogHeading>保护工作表</DialogHeading>
      <DialogHelp>?</DialogHelp>
      <button aria-label='Close'><CloseIcon /></button>
    </DialogTitle>
    <DialogBody>
      <FieldLabel htmlFor='protect-password'>取消工作表保护时使用的密码(<u>P</u>):</FieldLabel>
      <PasswordInput id='protect-password' defaultValue='*****' />
      <PermissionList>
        <CheckRow><CheckBox type='checkbox' />删除列</CheckRow>
        <CheckRow><CheckBox type='checkbox' />删除行</CheckRow>
      </PermissionList>
      <DialogActions $top={15}>
        <DialogButton $primary>确定</DialogButton>
        <DialogButton>取消</DialogButton>
      </DialogActions>
    </DialogBody>
  </Dialog>
)

const ConfirmDialog = () => (
  <Dialog $top={398} $width={300}>
    <DialogTitle $active>
      <DialogHeading>确认密码</DialogHeading>
      <DialogHelp>?</DialogHelp>
      <button aria-label='Close'><CloseIcon /></button>
    </DialogTitle>
    <DialogBody>
      <FieldLabel htmlFor='confirm-password'>重新输入密码(<u>R</u>):</FieldLabel>
      <PasswordInput id='confirm-password' defaultValue='*****' />
      <Warning>
        {'警告: 如果丢失或忘记密码，则无法将其恢复。建议将\n密码及其相应工作簿和工作表名称的列表保存在安全的\n地方(请记住，密码是区分大小写的)。'}
      </Warning>
      <DialogActions>
        <DialogButton $focused>确定</DialogButton>
        <DialogButton>取消</DialogButton>
      </DialogActions>
    </DialogBody>
  </Dialog>
)

const TaskbarRow = () => (
  <Taskbar>
    <Weather>
      <Svg w={24} h={18}>
        <path d='M6 15a5 5 0 0 1 0-9 7 7 0 0 1 12.500 0A5 5 0 0 1 19 15z' fill='#8fb4ea' />
        <path d='M10 16a4 4 0 0 1 0-7.500 5 5 0 0 1 9 0 4 4 0 0 1 0 7.500z' fill='#b9d0f5' />
      </Svg>
      <span>12°C<br />阴</span>
    </Weather>
    <Apps>
      <AppButton aria-label='Start'>
        <Svg w={24}>
          <path d='M0 0h11.500v11.500H0zM12.500 0H24v11.500H12.500z' fill='#1ca4ea' />
          <path d='M0 12.500h11.500V24H0zM12.500 12.500H24V24H12.500z' fill='#087cd4' />
        </Svg>
      </AppButton>
      <SearchBox>
        <Svg w={16} h={18}>
          <circle cx='7' cy='7' r='5.500' stroke='#222' strokeWidth='1.800' />
          <path d='M11 11.500l4 5' stroke='#222' strokeWidth='2' />
        </Svg>
        <SearchInput placeholder='搜索' aria-label='搜索' />
        <Svg w={47} h={24}>
          <ellipse cx='10' cy='10' rx='10' ry='7' transform='rotate(-40 10 10)' fill='#e8a552' />
          <ellipse cx='13' cy='6' rx='6' ry='5' fill='#f6c576' />
          <path d='M3 12q6-1 8-8M8 13l5 9M11 13l9 7M6 17q7 0 7 5M16 21l5-3' stroke='#d84f66' strokeWidth='2' />
          <path d='M29 3q6-3 12 0l-1 14H30z' fill='#5d4a7c' />
          <path d='M30 12h10v4H30z' fill='#8d79ad' />
          <path d='M24 16q11 5 22 0-1 7-11 7t-11-7z' fill='#6d5a90' />
        </Svg>
      </SearchBox>
      <AppButton aria-label='Task view'>
        <Svg w={24}>
          <path d='M0 7h18v16H0z' fill='#262626' />
          <path d='M6 1h18v16H6z' fill='#f8f8f8' />
          <path d='M6 7h12v10H6z' fill='#b9b9b9' />
        </Svg>
      </AppButton>
      <AppButton $running aria-label='File Explorer'>
        <Svg w={24}>
          <path d='M0 3q0-2 2-2h7l3 3h10v5H0z' fill='#d9940c' />
          <path d='M0 6h24v15q0 2-2 2H2q-2 0-2-2z' fill='#fcc934' />
          <path d='M4 23v-5q0-2 2-2h12q2 0 2 2v5z' fill='#1877c9' />
          <path d='M8 19h8' stroke='#0d4f93' strokeWidth='2' />
        </Svg>
      </AppButton>
      <AppButton $running aria-label='Edge'>
        <Svg w={24}>
          <circle cx='12' cy='12' r='12' fill='#1576c8' />
          <path d='M1 9a12 12 0 0 1 23 3c0 5-6 6-9 4 3-6-7-10-14-7z' fill='#36c2b4' />
          <path d='M15 1c6 2 9 6 9 11 0 5-6 6-9 4 2-4 1-5 0-6z' fill='#62d96b' />
          <path d='M9 12c-2 7 6 11 13 7-5 7-18 6-18-3 0-4 3-6 6-6z' fill='#0d4f9c' />
          <path d='M11 11c3-1 5 1 4 5 2 2 6 2 8-1-1 6-13 5-12-4z' fill='#c9eddc' />
        </Svg>
      </AppButton>
      <AppButton aria-label='Store'>
        <Svg w={24}>
          <path d='M7 6V2h10v4' stroke='#36b5ee' strokeWidth='2' />
          <path d='M0 6h24v15q0 3-3 3H3q-3 0-3-3z' fill='#194c85' />
          <path d='M7 10h4v4H7z' fill='#f25022' />
          <path d='M12.500 10h4v4h-4z' fill='#7fba00' />
          <path d='M7 15.500h4v4H7z' fill='#00a4ef' />
          <path d='M12.500 15.500h4v4h-4z' fill='#ffb900' />
        </Svg>
      </AppButton>
      <AppButton $running aria-label='Calculator'>
        <Svg w={18} h={24}>
          <rect width='18' height='24' rx='1' fill='#6c7680' />
          <path d='M2 2h14v5H2z' fill='#36c5f5' />
          <path d='M2 9h4v3H2zM7 9h4v3H7zM12 9h4v3h-4zM2 14h4v3H2zM7 14h4v3H7zM2 19h4v3H2zM7 19h4v3H7z' fill='#d3d9df' />
          <path d='M12 14h4v8h-4z' fill='#0a4a8c' />
        </Svg>
      </AppButton>
      <AppButton $running aria-label='WeChat'>
        <Svg w={24}>
          <ellipse cx='9' cy='9' rx='9' ry='8' fill='#20d168' />
          <path d='M3 14l-1 5 5-3z' fill='#20d168' />
          <circle cx='6' cy='7' r='1.300' fill='#0b7a3a' />
          <circle cx='12' cy='7' r='1.300' fill='#0b7a3a' />
          <ellipse cx='17' cy='15' rx='7' ry='6.500' fill='#e9eeeb' />
          <circle cx='14.500' cy='13.500' r='1' fill='#888' />
          <circle cx='19.500' cy='13.500' r='1' fill='#888' />
        </Svg>
      </AppButton>
      <AppButton $running aria-label='Chrome'>
        <Svg w={24}>
          <circle cx='12' cy='12' r='12' fill='#fbc116' />
          <path d='M12 12L1.600 6A12 12 0 0 0 12 24l5-9z' fill='#229342' />
          <path d='M12 6.500h10.500A12 12 0 0 0 1.600 6l5.500 9z' fill='#e33b2e' />
          <circle cx='12' cy='12' r='6' fill='#fff' />
          <circle cx='12' cy='12' r='4.700' fill='#1a73e8' />
        </Svg>
      </AppButton>
      <AppButton $running aria-label='Finance'>
        <Svg w={24}>
          <rect width='24' height='24' rx='1' fill='#2f5bff' />
          <path d='M6 3l6 6 6-6M6 10h12M6 14h12M12 9v12' stroke='#c9f0ea' strokeWidth='2.500' />
        </Svg>
      </AppButton>
      <AppButton $active aria-label='Excel'>
        <Svg w={24}>
          <path d='M12 3h11v18H12z' fill='#fff' stroke='#217346' />
          <path d='M15 7h2M19 7h2M15 10h2M19 10h2M15 13h2M19 13h2M15 16h2M19 16h2' stroke='#217346' strokeWidth='2' />
          <path d='M0 3l14-3v24L0 21z' fill='#217346' />
          <path d='M4 7.500l6 9M10 7.500l-6 9' stroke='#fff' strokeWidth='2' />
        </Svg>
      </AppButton>
    </Apps>
    <Tray>
      <TrayItem $width={32} aria-label='Hidden icons'><Chevron color='#1a1a1a' width={1.5} size={11} /></TrayItem>
      <TrayItem $width={32} aria-label='Sync'>
        <Svg w={17}>
          <path d='M1 7a7 7 0 0 1 13-2M15 1v5h-5M2 15v-5h5M3 11q2 4 6 4' stroke='#1a1a1a' strokeWidth='1.300' />
          <circle cx='13' cy='13' r='4' fill='#0078d4' />
        </Svg>
      </TrayItem>
      <TrayItem $width={32}>英</TrayItem>
      <TrayItem $width={44}>拼</TrayItem>
      <TrayItem $width={32} aria-label='Network'>
        <Svg w={17}>
          <path d='M11 2H1v11h12V8M5 15.500h6M8 13v2M12 1h4v4h-4zM14 5v10' stroke='#1a1a1a' />
        </Svg>
      </TrayItem>
      <TrayItem $width={18} aria-label='Volume'>
        <Svg w={17} h={14}>
          <path d='M1 5h2l4-3.500v11L3 9H1zM9.500 5q1.500 2 0 4M11.500 3q3 4 0 8M13.500 1q4.500 6 0 12' stroke='#1a1a1a' />
        </Svg>
      </TrayItem>
      <Clock>15:20<br />2025/12/16</Clock>
    </Tray>
  </Taskbar>
)

const tabs = ['开始', '插入', '页面布局', '公式', '数据', '审阅', '视图', '帮助']

const App = () => {
  const [zoom, setZoom] = useState(80)

  return (
    <Window>
      <GlobalStyle />
      <TitleBar>
        <QuickAccess>
          <QuickButton aria-label='Save'><SaveIcon /></QuickButton>
          <QuickButton aria-label='Undo'>
            <UndoIcon color='#fff' />
            <Caret />
          </QuickButton>
          <QuickButton aria-label='Redo'>
            <UndoIcon flip color='#4f9170' />
            <Caret color='#4f9170' />
          </QuickButton>
          <QuickButton aria-label='Customize'>
            <Svg w={8} h={8}>
              <path d='M1 1.500h6' stroke='#fff' />
              <path d='M1 4h6L4 7z' fill='#fff' />
            </Svg>
          </QuickButton>
        </QuickAccess>
        <DocTitle>{'2026 FO Duty Roster (HIEX & HI)  -  Excel'}</DocTitle>
        <WindowControls>
          <UserName>Lilith Zhong</UserName>
          <WindowButton aria-label='Ribbon options'>
            <Svg w={13} h={10}>
              <path d='M.5.500h12v9H.5zM.5 2.500h12M6.500 8V4.500M4.500 6l2-2 2 2' stroke='#6aa584' />
            </Svg>
          </WindowButton>
          <WindowButton aria-label='Minimize'>
            <Svg w={10} h={10}><path d='M0 5.500h10' stroke='#6aa584' /></Svg>
          </WindowButton>
          <WindowButton aria-label='Restore'>
            <Svg w={10} h={10}><path d='M.5 2.500h7v7h-7zM2.500 2.500v-2h7v7h-2' stroke='#6aa584' /></Svg>
          </WindowButton>
          <WindowButton aria-label='Close'><CloseIcon color='#6aa584' size={10} /></WindowButton>
        </WindowControls>
      </TitleBar>
      <TabBar>
        <RibbonTab $width={60}>文件</RibbonTab>
        {tabs.map((tab) => (
          <RibbonTab key={tab} $active={tab === '审阅'} $width={tab.length * 12 + 27}>
            {tab}
          </RibbonTab>
        ))}
        <TellMe><BulbIcon />告诉我你想要做什么</TellMe>
        <ShareButton><ShareIcon />共享</ShareButton>
      </TabBar>
      <RibbonBar />
      <FormulaBar>
        <NameBox>
          <NameInput aria-label='Name box' defaultValue='AP12' />
          <Arrow dir={ARROWS.down} />
        </NameBox>
        <Grip $pad='9px 14px'><i /></Grip>
        <FormulaTools>
          <CloseIcon color='#c0c0c0' size={11} />
          <Svg w={14} h={12}><path d='M1 7l4 4 8-10' stroke='#c0c0c0' strokeWidth='2' /></Svg>
          <Svg w={16} h={16}>
            <text x='2' y='12' fontSize='14' fontStyle='italic' fontWeight='bold' fontFamily='Liberation Serif' fill='#555'>f</text>
            <text x='7' y='13' fontSize='10' fontStyle='italic' fontWeight='bold' fontFamily='Liberation Serif' fill='#555'>x</text>
          </Svg>
        </FormulaTools>
        <FormulaField>
          <FormulaInput aria-label='Formula' />
          <FormulaCollapse aria-label='Collapse formula bar'><Chevron color='#c0c0c0' size={8} /></FormulaCollapse>
        </FormulaField>
      </FormulaBar>
      <SheetArea>
        <SheetView><Roster /></SheetView>
        <ScrollColumn>
          <ScrollButton aria-label='Scroll up'><Arrow dir={ARROWS.up} /></ScrollButton>
          <ScrollTrack $vertical><ScrollThumb $size='82%' /></ScrollTrack>
          <ScrollButton aria-label='Scroll down'><Arrow dir={ARROWS.down} /></ScrollButton>
        </ScrollColumn>
      </SheetArea>
      <SheetTabs>
        <SheetNav>
          <Arrow dir={ARROWS.left} color='#bcbcbc' />
          <Arrow dir={ARROWS.right} color='#bcbcbc' />
        </SheetNav>
        <SheetTab $active>1月</SheetTab>
        <SheetTab>2月</SheetTab>
        <TabDivider />
        <button aria-label='New sheet'>
          <Svg w={17}>
            <circle cx='8.500' cy='8.500' r='7.500' stroke='#777' />
            <path d='M8.500 4.500v8M4.500 8.500h8' stroke='#777' strokeWidth='2' />
          </Svg>
        </button>
        <Grip $push $pad='0 15px 0 0'><i /></Grip>
        <HScroll>
          <ScrollButton aria-label='Scroll left'><Arrow dir={ARROWS.left} /></ScrollButton>
          <ScrollTrack><ScrollThumb $size='95%' /></ScrollTrack>
          <ScrollButton aria-label='Scroll right'><Arrow dir={ARROWS.right} /></ScrollButton>
        </HScroll>
      </SheetTabs>
      <StatusBar>
        <StatusText>就绪</StatusText>
        <ViewButtons>
          <ViewButton $active aria-label='Normal view'>
            <Svg w={14}><path d='M.5.500h13v12H.5zM.5 4.500h13M.5 8.500h13M4.500.500v12M9.500.500v12' stroke='#666' /></Svg>
          </ViewButton>
          <ViewButton aria-label='Page layout'>
            <Svg w={14}><path d='M.5.500h13v12H.5zM3.500 2.500h7v8h-7zM5 4.500h4M5 6.500h4M5 8.500h4' stroke='#666' /></Svg>
          </ViewButton>
          <ViewButton aria-label='Page break preview'>
            <Svg w={14}><path d='M.5.500h13v12H.5zM.5 7.500h8v-7M4.500.500v7' stroke='#666' /></Svg>
          </ViewButton>
        </ViewButtons>
        <button aria-label='Zoom out'><Svg w={7}><path d='M0 3.500h6' stroke='#555' strokeWidth='2' /></Svg></button>
        <ZoomSlider type='range' min='10' max='190' value={zoom} onChange={(e) => setZoom(+e.target.value)} aria-label='Zoom' />
        <button aria-label='Zoom in'><Svg w={7}><path d='M0 3.500h7M3.500 0v7' stroke='#555' strokeWidth='2' /></Svg></button>
        <ZoomValue>{zoom}%</ZoomValue>
      </StatusBar>
      <TaskbarRow />
      <ProtectDialog />
      <ConfirmDialog />
    </Window>
  )
}

export default App
